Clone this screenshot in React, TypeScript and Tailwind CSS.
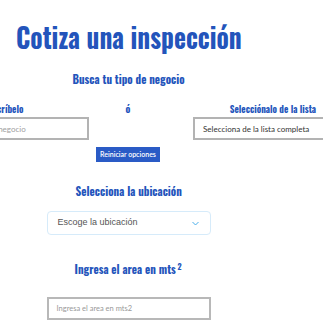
import React from "react";

const head = {
  fontFamily: '"Oswald", "Liberation Sans Narrow", "DejaVu Sans Condensed", "Roboto Condensed", "Liberation Sans", sans-serif',
};

export default function App() {
  return (
    <div className="w-[323px] h-[323px] overflow-hidden bg-white relative">
      {/* Title */}
      <h1
        className="pl-4 pt-[20px] text-[28px] leading-[34px] font-bold text-[#2354bb] whitespace-nowrap"
        style={head}
      >
        <span className="inline-block origin-left scale-x-[0.91]">Cotiza una inspección</span>
      </h1>

      {/* Busca tu tipo */}
      <div className="w-[257px] mt-[16px] text-center">
        <h2 className="text-[12.5px] leading-[18px] font-bold text-[#2354bb] scale-x-[0.89]" style={head}>
          Busca tu tipo de negocio
        </h2>
      </div>

      {/* Three columns */}
      <div className="flex ml-[-63px] mt-[14px] whitespace-nowrap">
        <div className="w-[152px] flex flex-col items-center shrink-0">
          <span className="pr-[14px] text-[10px] leading-[14px] font-bold text-[#2354bb] scale-x-[0.92]" style={head}>
            Escríbelo
          </span>
          <div className="w-full h-[23px] mt-[1px] border-2 border-[#b3b3b3] bg-white flex items-center pl-[22px] text-[8px] text-[#a0a0a0] font-['Lato',sans-serif]">
            Tu tipo de negocio
          </div>
        </div>
        <div className="w-[78px] flex flex-col items-center shrink-0">
          <span className="text-[10px] leading-[14px] font-bold text-[#2354bb]" style={head}>
            ó
          </span>
          <button className="mt-[31px] w-[64px] h-[15px] bg-[#2a5bc6] text-white text-[7px] font-semibold font-['Lato',sans-serif] flex items-center justify-center">
            Reiniciar opciones
          </button>
        </div>
        <div className="w-[159px] ml-[26px] flex flex-col items-center shrink-0">
          <span className="text-[10px] leading-[14px] font-bold text-[#2354bb] scale-x-[0.92]" style={head}>
            Selecciónalo de la lista
          </span>
          <div className="w-full h-[23px] mt-[1px] border-2 border-[#b3b3b3] bg-white flex items-center pl-[8px] text-[8px] text-[#333] font-['Lato',sans-serif]">
            Selecciona de la lista completa
          </div>
        </div>
      </div>

      {/* Ubicación */}
      <div className="w-[257px] mt-[20px] flex flex-col items-center">
        <h2 className="text-[12.5px] leading-[18px] font-bold text-[#2354bb] scale-x-[0.89]" style={head}>
          Selecciona la ubicación
        </h2>
        <div className="w-[164px] h-[24px] mt-[11px] border border-[#d6ebfa] rounded-[4px] bg-white flex items-center justify-between pl-[10px] pr-[11px]">
          <span className="text-[9px] text-[#555] font-['Liberation_Sans',sans-serif]">Escoge la ubicación</span>
          <svg width="7" height="5" viewBox="0 0 7 5" fill="none">
            <path d="M0.5 1l3 3 3-3" stroke="#4aaeea" strokeWidth="1" />
          </svg>
        </div>
      </div>

      {/* Area */}
      <div className="w-[257px] mt-[25px] flex flex-col items-center">
        <h2 className="text-[12.5px] leading-[18px] font-bold text-[#2354bb] scale-x-[0.89]" style={head}>
          Ingresa el area en mts<sup className="text-[9px] ml-[2px]">2</sup>
        </h2>
        <div className="w-[164px] h-[23px] mt-[19px] border-2 border-[#b8b8b8] bg-white flex items-center pl-[8px] text-[7.5px] text-[#999] font-['Lato',sans-serif]">
          Ingresa el area en mts2
        </div>
      </div>
    </div>
  );
}
